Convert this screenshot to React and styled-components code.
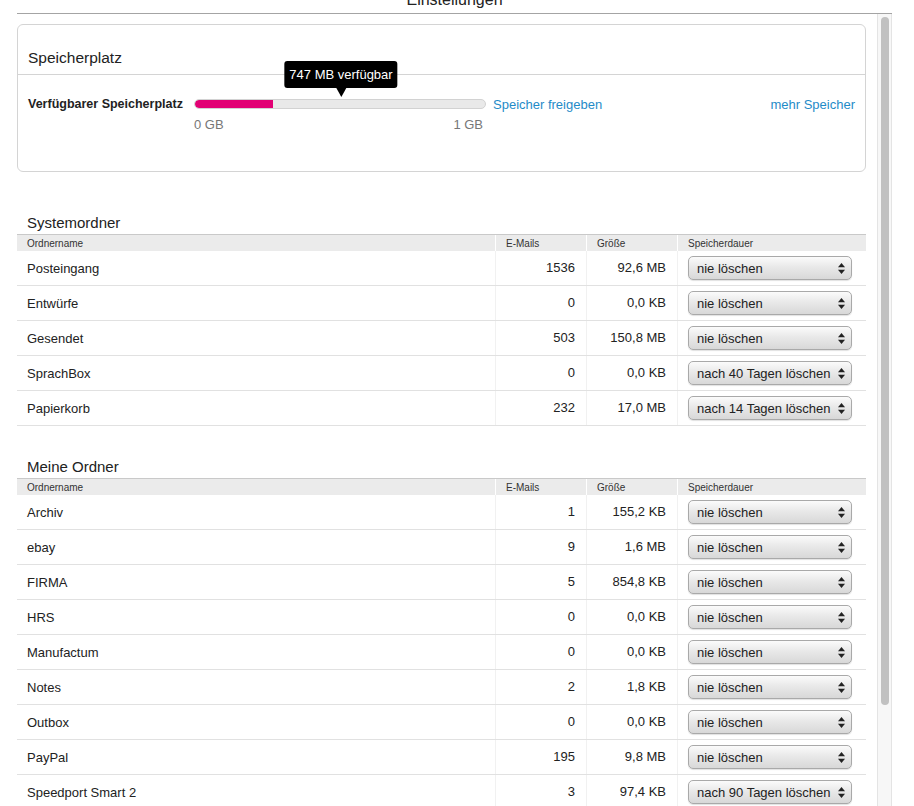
import React from "react";
import styled, { createGlobalStyle } from "styled-components";

const GlobalStyle = createGlobalStyle`
  html, body {
    margin: 0;
    padding: 0;
    background: #fff;
    overflow: hidden;
  }
  body {
    font-family: "Liberation Sans", Arial, Helvetica, sans-serif;
    color: #333;
  }
`;

const systemFolders = [
  { name: "Posteingang", mails: "1536", size: "92,6 MB", keep: "nie löschen" },
  { name: "Entwürfe", mails: "0", size: "0,0 KB", keep: "nie löschen" },
  { name: "Gesendet", mails: "503", size: "150,8 MB", keep: "nie löschen" },
  { name: "SprachBox", mails: "0", size: "0,0 KB", keep: "nach 40 Tagen löschen" },
  { name: "Papierkorb", mails: "232", size: "17,0 MB", keep: "nach 14 Tagen löschen" },
];

const myFolders = [
  { name: "Archiv", mails: "1", size: "155,2 KB", keep: "nie löschen" },
  { name: "ebay", mails: "9", size: "1,6 MB", keep: "nie löschen" },
  { name: "FIRMA", mails: "5", size: "854,8 KB", keep: "nie löschen" },
  { name: "HRS", mails: "0", size: "0,0 KB", keep: "nie löschen" },
  { name: "Manufactum", mails: "0", size: "0,0 KB", keep: "nie löschen" },
  { name: "Notes", mails: "2", size: "1,8 KB", keep: "nie löschen" },
  { name: "Outbox", mails: "0", size: "0,0 KB", keep: "nie löschen" },
  { name: "PayPal", mails: "195", size: "9,8 MB", keep: "nie löschen" },
  { name: "Speedport Smart 2", mails: "3", size: "97,4 KB", keep: "nach 90 Tagen löschen" },
];

function SelectArrows() {
  return (
    <svg width="7" height="11" viewBox="0 0 7 11">
      <path d="M3.5 0 L7 4.3 L0 4.3 Z" fill="#222" />
      <path d="M3.5 11 L7 6.7 L0 6.7 Z" fill="#222" />
    </svg>
  );
}

function FolderTable({ title, folders, first }) {
  return (
    <Section $first={first}>
      <SectionTitle>{title}</SectionTitle>
      <TableHead>
        <HeadCell>Ordnername</HeadCell>
        <HeadCell $divider>E-Mails</HeadCell>
        <HeadCell $divider>Größe</HeadCell>
        <HeadCell $divider>Speicherdauer</HeadCell>
      </TableHead>
      {folders.map((f) => (
        <Row key={f.name}>
          <NameCell>{f.name}</NameCell>
          <NumCell>{f.mails}</NumCell>
          <NumCell>{f.size}</NumCell>
          <SelectCell>
            <FakeSelect>
              <SelectText>{f.keep}</SelectText>
              <SelectArrows />
            </FakeSelect>
          </SelectCell>
        </Row>
      ))}
    </Section>
  );
}

export default function App() {
  return (
    <>
      <GlobalStyle />
      <Page>
        <Header>
          <HeaderTitle>Einstellungen</HeaderTitle>
        </Header>
        <Viewport>
          <Content>
            <Card>
              <CardTitle>Speicherplatz</CardTitle>
              <CardBody>
                <StorageLabel>Verfügbarer Speicherplatz</StorageLabel>
                <BarWrap>
                  <Bar>
                    <BarFill style={{ width: `${(277 / 1024) * 100}%` }} />
                  </Bar>
                  <Tooltip>747 MB verfügbar</Tooltip>
                </BarWrap>
                <Link $gap>Speicher freigeben</Link>
                <Link $right>mehr Speicher</Link>
                <Scale>
                  <span>0 GB</span>
                  <span>1 GB</span>
                </Scale>
              </CardBody>
            </Card>
            <FolderTable title="Systemordner" folders={systemFolders} first />
            <FolderTable title="Meine Ordner" folders={myFolders} />
          </Content>
          <ScrollTrack>
            <ScrollThumb />
          </ScrollTrack>
        </Viewport>
      </Page>
    </>
  );
}

const Page = styled.div`
  padding-left: 17px;
  width: 875px;
  height: 100vh;
  display: flex;
  flex-direction: column;
`;

const Header = styled.div`
  height: 13px;
  border-bottom: 1px solid #a4a4a4;
  display: flex;
  align-items: flex-end;
  justify-content: center;
  overflow: hidden;
  flex-shrink: 0;
`;

const HeaderTitle = styled.div`
  font-size: 16px;
  line-height: 16px;
  margin-bottom: 5px;
  color: #222;
`;

const Viewport = styled.div`
  flex: 1;
  min-height: 0;
  display: flex;
`;

const Content = styled.div`
  flex: 1;
  min-width: 0;
  overflow: hidden;
  padding: 10px 11px 0 0;
`;

const ScrollTrack = styled.div`
  width: 13px;
  flex-shrink: 0;
  background: #f7f7f7;
  border-left: 1px solid #e4e4e4;
  border-right: 1px solid #e4e4e4;
`;

const ScrollThumb = styled.div`
  height: 688px;
  margin: 3px 2px 0 3px;
  background: #c1c1c1;
  border-radius: 4px;
`;

const Card = styled.div`
  border: 1px solid #d4d4d4;
  border-radius: 6px;
`;

const CardTitle = styled.div`
  font-size: 15.5px;
  line-height: 20px;
  color: #222;
  padding: 23px 10px 6px;
  border-bottom: 1px solid #d4d4d4;
`;

const CardBody = styled.div`
  display: grid;
  grid-template-columns: 166px 292px auto 1fr auto;
  grid-template-rows: 20px 16px;
  row-gap: 2px;
  align-items: center;
  padding: 19px 10px 39px 10px;
`;

const StorageLabel = styled.div`
  font-size: 12.5px;
  font-weight: bold;
  color: #222;
  white-space: nowrap;
`;

const BarWrap = styled.div`
  position: relative;
  height: 20px;
  display: flex;
  align-items: center;
`;

const Bar = styled.div`
  width: 100%;
  height: 8px;
  background: #e9e9e9;
  border: 1px solid #d2d2d2;
  border-radius: 5px;
  overflow: hidden;
`;

const BarFill = styled.div`
  height: 100%;
  background: #e20074;
  border-radius: 5px 0 0 5px;
`;

const Tooltip = styled.div`
  position: absolute;
  left: 50%;
  bottom: 26px;
  transform: translateX(-50%);
  margin-left: 1px;
  background: #000;
  color: #fff;
  font-size: 13px;
  line-height: 27px;
  padding: 0 5px;
  border-radius: 3px;
  white-space: nowrap;

  &::after {
    content: "";
    position: absolute;
    left: 50%;
    bottom: -9px;
    margin-left: -5px;
    border-left: 5px solid transparent;
    border-right: 5px solid transparent;
    border-top: 9px solid #000;
  }
`;

const Link = styled.a`
  font-size: 13px;
  color: #1f8bc8;
  cursor: pointer;
  margin-left: ${(p) => (p.$gap ? "7px" : "0")};
  grid-column: ${(p) => (p.$right ? "5" : "auto")};
  white-space: nowrap;
`;

const Scale = styled.div`
  grid-column: 2;
  grid-row: 2;
  display: flex;
  justify-content: space-between;
  padding-right: 3px;
  font-size: 13px;
  color: #777;
`;

const Section = styled.div`
  margin-top: ${(p) => (p.$first ? "40px" : "30px")};
`;

const SectionTitle = styled.div`
  font-size: 15px;
  line-height: 20px;
  color: #222;
  padding: 1px 0 0 10px;
  margin-bottom: 1px;
`;

const cols = "478px 91px 91px 189px";

const TableHead = styled.div`
  display: grid;
  grid-template-columns: ${cols};
  height: 16px;
  background: #ebebeb;
  border-top: 1px solid #c9c9c9;
`;

const HeadCell = styled.div`
  font-size: 10px;
  line-height: 17px;
  color: #333;
  padding-left: 10px;
  border-left: ${(p) => (p.$divider ? "1px solid #fff" : "none")};
`;

const Row = styled.div`
  display: grid;
  grid-template-columns: ${cols};
  height: 34px;
  border-bottom: 1px solid #e1e1e1;
  align-items: center;
`;

const NameCell = styled.div`
  font-size: 13px;
  color: #222;
  padding-left: 10px;
`;

const NumCell = styled.div`
  font-size: 13px;
  color: #222;
  text-align: right;
  padding-right: 11px;
  height: 100%;
  line-height: 34px;
  border-left: 1px solid #f1f1f1;
`;

const SelectCell = styled.div`
  height: 100%;
  display: flex;
  align-items: center;
  padding-left: 10px;
  border-left: 1px solid #f1f1f1;
`;

const FakeSelect = styled.div`
  width: 164px;
  height: 24px;
  box-sizing: border-box;
  display: flex;
  align-items: center;
  padding: 0 6px 0 8px;
  border: 1px solid #a9a9a9;
  border-radius: 5px;
  background: linear-gradient(#fbfbfb 0%, #e9e9e9 45%, #d8d8d8 100%);
  box-shadow: 0 1px 1px rgba(0, 0, 0, 0.12);
`;

const SelectText = styled.span`
  flex: 1;
  font-size: 13px;
  color: #222;
  white-space: nowrap;
  overflow: hidden;
  margin-right: 4px;
`;
